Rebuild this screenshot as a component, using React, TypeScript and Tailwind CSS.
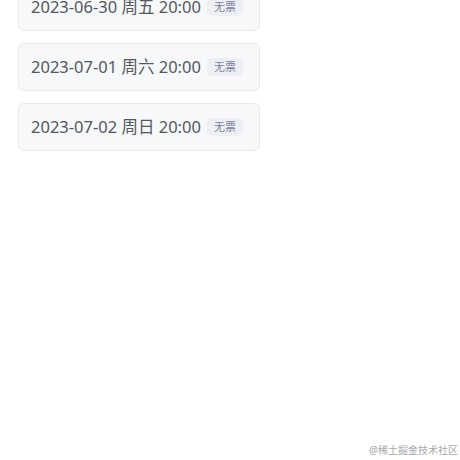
const sessions = [
  { date: "2023-06-30", week: "周五", time: "20:00" },
  { date: "2023-07-01", week: "周六", time: "20:00" },
  { date: "2023-07-02", week: "周日", time: "20:00" },
];

export default function App() {
  return (
    <div
      className="relative h-[460px] w-[460px] overflow-hidden bg-white"
      style={{ fontFamily: '"Noto Sans", "Noto Sans CJK SC", sans-serif' }}
    >
      <div className="-mt-[17px] flex flex-col items-start gap-3 pl-[18px]">
        {sessions.map((s) => (
          <div
            key={s.date}
            className="flex h-12 items-center gap-[6px] rounded-md border border-[#e8e9ed] bg-[#f7f8fa] pl-3 pr-4"
          >
            <span className="text-[16.5px] text-[#54575e]">
              {s.date} {s.week} {s.time}
            </span>
            <span className="rounded-[5px] bg-[#edeff5] px-[7px] py-[1px] text-[11px] leading-4 text-[#7a8299]">
              无票
            </span>
          </div>
        ))}
      </div>
      <div className="absolute bottom-[2px] right-[2px] text-[10px] text-[#a8a8a8]">
        @稀土掘金技术社区
      </div>
    </div>
  );
}
